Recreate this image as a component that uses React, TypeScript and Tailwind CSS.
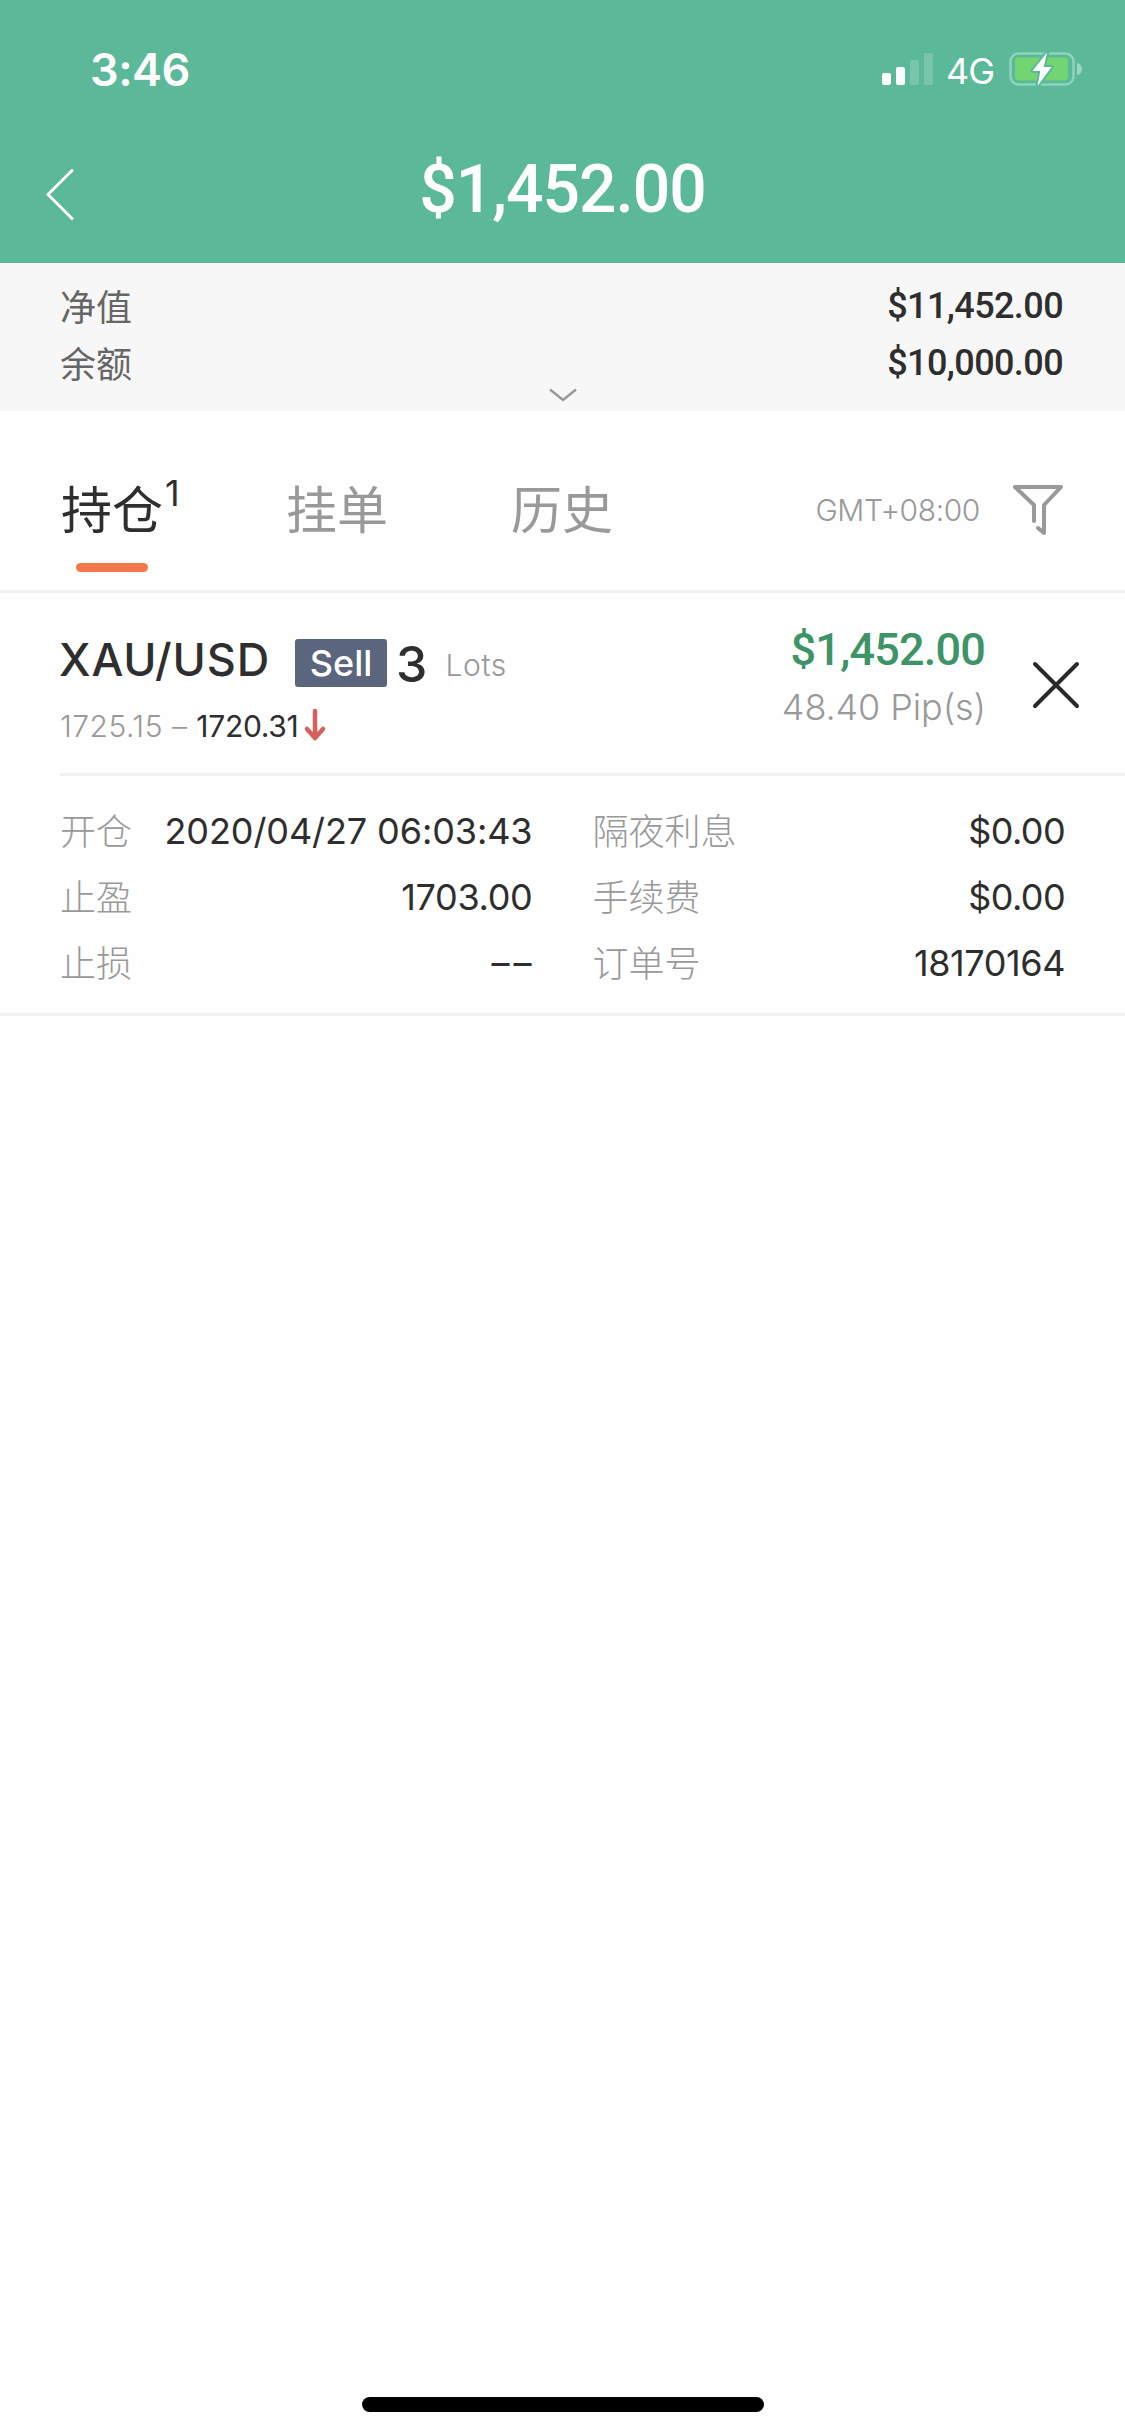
const summary = [
  { label: "净值", value: "$11,452.00" },
  { label: "余额", value: "$10,000.00" },
];

const details = [
  [
    { label: "开仓", value: "2020/04/27 06:03:43", tracking: "tracking-[-0.1px]" },
    { label: "止盈", value: "1703.00", tracking: "tracking-[-0.3px]" },
    { label: "止损", value: "––", tracking: "tracking-[4px] -mr-[3px]" },
  ],
  [
    { label: "隔夜利息", value: "$0.00", tracking: "tracking-[-0.6px]" },
    { label: "手续费", value: "$0.00", tracking: "tracking-[-0.6px]" },
    { label: "订单号", value: "18170164", tracking: "tracking-[-0.4px]" },
  ],
];

const SignalIcon = () => (
  <svg width="52" height="34" viewBox="0 0 52 34" fill="#fff">
    <rect x="0" y="21" width="9" height="12" rx="2" />
    <rect x="14" y="15" width="9" height="18" rx="2" />
    <rect x="28" y="8" width="9" height="25" rx="2" opacity="0.18" />
    <rect x="42" y="1" width="9" height="32" rx="2" opacity="0.18" />
  </svg>
);

const BatteryIcon = () => (
  <svg width="74" height="36" viewBox="0 0 74 36">
    <rect x="1.5" y="2.5" width="63" height="31" rx="8" fill="none" stroke="#8fd3bd" strokeWidth="2.5" />
    <path d="M68 12c3 .6 5 3 5 6s-2 5.400-5 6z" fill="#9ad6c2" />
    <rect x="6" y="6.500" width="53" height="23" rx="4" fill="#72d572" />
    <path
      d="M38 1.500 23.500 20h7.800L28.500 35 42.500 16h-7.800z"
      fill="#fff"
      stroke="#5bb999"
      strokeWidth="4"
      strokeLinejoin="round"
      paintOrder="stroke"
    />
  </svg>
);

const Header = () => (
  <header className="h-[263px] bg-[#5bb999] text-white">
    <div className="flex h-[138px] items-center justify-between pl-[90px] pr-[42px]">
      <span className="text-[45px] font-semibold leading-none tracking-[-0.5px]">3:46</span>
      <div className="flex items-center">
        <SignalIcon />
        <span className="ml-3 mr-[15px] mt-[3px] text-[36px] leading-none tracking-[-1px]">4G</span>
        <BatteryIcon />
      </div>
    </div>
    <div className="flex h-[101px] items-center pl-[45px]">
      <button className="mt-[11px] w-[60px]">
        <svg width="30" height="52" viewBox="0 0 30 52" fill="none" stroke="#fff" strokeWidth="3" strokeLinecap="round" strokeLinejoin="round">
          <path d="M27 2.500 3 26.500l24 24" />
        </svg>
      </button>
      <h1 className="mt-[3px] flex-1 pr-[105px] text-center font-[Roboto] text-[66px] font-medium leading-none tracking-[-1px]">
        $1,452.00
      </h1>
    </div>
  </header>
);

const Summary = () => (
  <section className="h-[148px] bg-[#f7f7f7] px-[60px] pt-[15px]">
    {summary.map((row) => (
      <div key={row.label} className="flex h-[57px] items-center justify-between">
        <span className="mt-[3px] text-[36px] leading-none text-[#666]">{row.label}</span>
        <span className="-mt-0.5 mr-0.5 font-[Roboto] text-[36px] font-medium leading-none tracking-[-0.6px] text-[#2e2e2e]">
          {row.value}
        </span>
      </div>
    ))}
    <svg className="mx-auto -mt-[5px]" width="30" height="16" viewBox="0 0 30 16" fill="none" stroke="#999" strokeWidth="2.500">
      <path d="m2 2.500 13 10.500 13-10.500" />
    </svg>
  </section>
);

const Tabs = () => (
  <nav className="flex h-[182px] items-center justify-between border-b-[3px] border-[#f1f1f1] px-[60px] pt-[19px]">
    <div className="flex text-[51px] leading-none text-[#999]">
      <div className="relative flex w-[226px] text-[#2e2e2e]">
        <span className="ml-px">持仓</span>
        <sup className="-top-2.5 ml-0.5 h-9 text-[36px] leading-none">1</sup>
        <span className="absolute left-4 top-[78px] h-[9px] w-[72px] rounded-full bg-[#f2784b]" />
      </div>
      <span className="w-[225px]">挂单</span>
      <span>历史</span>
    </div>
    <div className="flex items-center">
      <span className="mr-[31px] text-[30px] font-light leading-none tracking-[-0.4px] text-[#999]">GMT+08:00</span>
      <svg width="54" height="54" viewBox="0 0 54 54" fill="none" stroke="#999" strokeWidth="4" strokeLinecap="round" strokeLinejoin="round">
        <path d="M23 38V22L4 4h46L33 22v28l-6-5" />
      </svg>
    </div>
  </nav>
);

const Position = () => (
  <article className="border-b-[3px] border-[#f1f1f1] text-[#2e2e2e]">
    <div className="ml-[60px] flex h-[183px] justify-between border-b-[3px] border-[#f1f1f1] pr-11">
      <div className="pt-[42px]">
        <div className="flex h-[56px] items-center leading-none">
          <span className="-ml-px -mt-[7px] text-[45px] font-medium tracking-[0.9px]">XAU/USD</span>
          <span className="ml-[25px] flex h-12 w-[92px] items-center justify-center rounded-[3px] bg-[#5b657e] text-[36px] font-medium text-white">
            Sell
          </span>
          <span className="ml-[9px] mt-px text-[50px] font-medium">3</span>
          <span className="ml-[18px] mt-[3px] text-[30px] font-light tracking-[0.6px] text-[#999]">Lots</span>
        </div>
        <div className="mt-[17px] flex h-[36px] items-center text-[30px] leading-none">
          <span className="font-light tracking-[0.5px] text-[#999]">1725.15 –&nbsp;</span>
          <span className="tracking-[-0.3px]">1720.31</span>
          <svg className="-mt-0.5 ml-[5px]" width="24" height="34" viewBox="0 0 24 34" fill="none" stroke="#d6605c" strokeWidth="4.500" strokeLinecap="round" strokeLinejoin="round">
            <path d="M12 3v27M4 21l8 9 8-9" />
          </svg>
        </div>
      </div>
      <div className="flex">
        <div className="pt-[31px] text-right">
          <p className="mr-px font-[Roboto] text-[45px] font-medium leading-[52px] tracking-[-0.8px] text-[#3c9467]">$1,452.00</p>
          <p className="mt-[3px] text-[36px] font-light leading-[56px] tracking-[-0.1px] text-[#999]">48.40 Pip(s)</p>
        </div>
        <button className="ml-[45px] mt-[67px] size-[50px]">
          <svg width="50" height="50" viewBox="0 0 50 50" stroke="#2b2b2b" strokeWidth="4" strokeLinecap="round">
            <path d="m4 4 42 42M46 4 4 46" />
          </svg>
        </button>
      </div>
    </div>
    <div className="grid h-[237px] grid-cols-2 gap-x-[60px] px-[60px] pt-[22px]">
      {details.map((column, i) => (
        <dl key={i}>
          {column.map((item) => (
            <div key={item.label} className="flex h-[66px] items-center justify-between text-[36px] leading-none">
              <dt className="mt-0.5 font-light text-[#999]">{item.label}</dt>
              <dd className={item.tracking}>{item.value}</dd>
            </div>
          ))}
        </dl>
      ))}
    </div>
  </article>
);

const App = () => {
  return (
    <div className="flex h-[2436px] w-[1125px] flex-col overflow-hidden bg-[#fefefe] font-[Inter,'Noto_Sans_CJK_SC',sans-serif]">
      <Header />
      <Summary />
      <Tabs />
      <Position />
      <div className="mx-auto mb-6 mt-auto h-[15px] w-[402px] rounded-full bg-black" />
    </div>
  );
};

export default App;
